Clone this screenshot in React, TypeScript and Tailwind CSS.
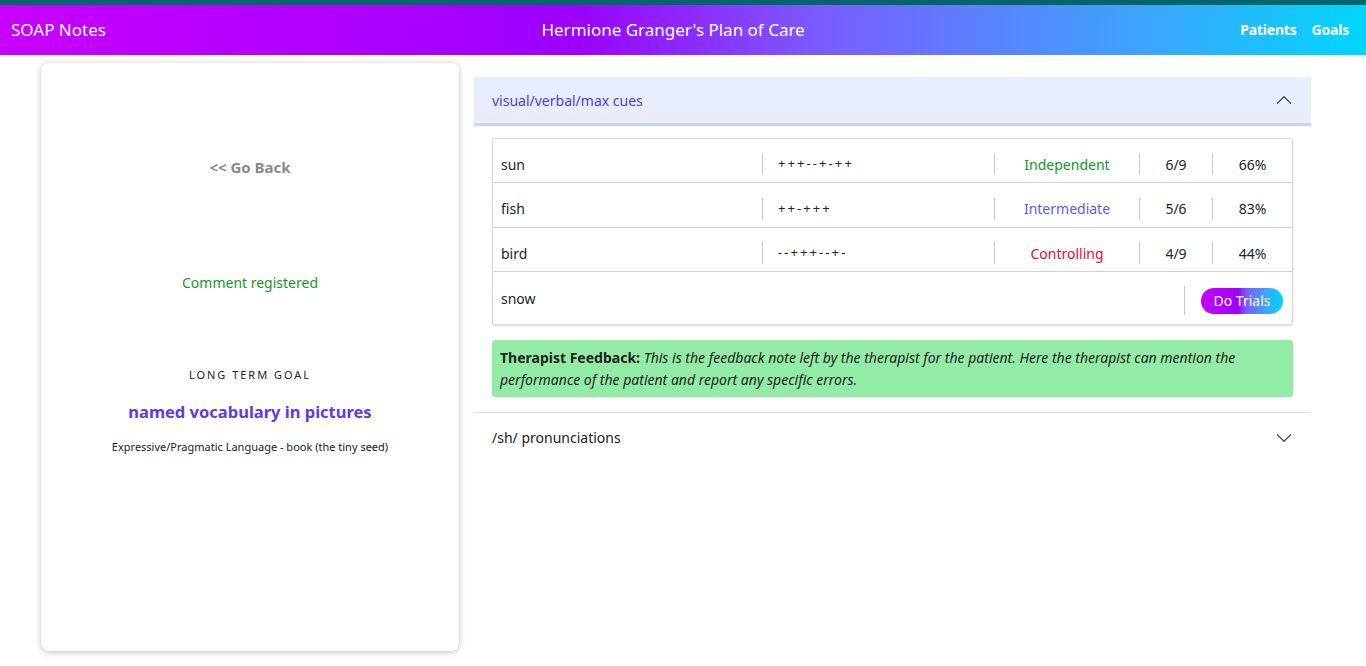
import React from 'react';

const font = "font-['Noto_Sans','Open_Sans',sans-serif]";

const rows = [
  { word: 'sun', marks: '+++--+-++', level: 'Independent', tone: 'text-[#0a9a2a]', score: '6/9', pct: '66%', h: 'h-[44px]' },
  { word: 'fish', marks: '++-+++', level: 'Intermediate', tone: 'text-[#5b5bf0]', score: '5/6', pct: '83%', h: 'h-[45px]' },
  { word: 'bird', marks: '--+++--+-', level: 'Controlling', tone: 'text-[#ee0a2a]', score: '4/9', pct: '44%', h: 'h-[44px]' },
];

const Chevron: React.FC<{ up?: boolean }> = ({ up }) => (
  <svg width="18" height="18" viewBox="0 0 16 16" fill="#333" className={up ? 'rotate-180' : ''}>
    <path d="M1.646 4.646a.5.5 0 0 1 .708 0L8 10.293l5.646-5.647a.5.5 0 0 1 .708.708l-6 6a.5.5 0 0 1-.708 0l-6-6a.5.5 0 0 1 0-.708z" />
  </svg>
);

const Cell: React.FC<{ className?: string; children: React.ReactNode }> = ({ className = '', children }) => (
  <div className={`flex items-center h-[22px] border-l border-[#ccc] ${className}`}>{children}</div>
);

export default function App() {
  return (
    <div className={`min-h-screen bg-white text-[#212529] ${font}`}>
      {/* top bar */}
      <div className="h-[5px] bg-[#05656a]" />
      <header className="h-[50px] flex items-center justify-between px-[11px] text-white bg-[linear-gradient(to_right,#c800ff_0%,#9c00ff_42%,#7a5cff_60%,#3aa8ff_85%,#00d6ff_100%)]">
        <div className="text-[17px]">SOAP Notes</div>
        <div className="text-[17px]">Hermione Granger's Plan of Care</div>
        <nav className="flex gap-[15px] text-[14px] tracking-[-0.2px] font-bold pr-[6px] -mt-[1px]">
          <span>Patients</span>
          <span>Goals</span>
        </nav>
      </header>

      <div className="flex">
        {/* left card */}
        <aside className="ml-[41px] mt-[8px] w-[418px] h-[588px] rounded-lg bg-white shadow-[0_1px_6px_rgba(0,0,0,0.25)] flex flex-col items-center text-center">
          <div className="mt-[93px] text-[15px] font-bold text-[#8a8a8a]">&lt;&lt; Go Back</div>
          <div className="mt-[93px] text-[14px] text-[#119a22]">Comment registered</div>
          <div className="mt-[74px] text-[11px] tracking-[0.18em] text-[#222]">LONG TERM GOAL</div>
          <div className="mt-[17px] text-[16.5px] font-bold text-[#5f3ae6]">named vocabulary in pictures</div>
          <div className="mt-[14px] text-[11px] text-[#222]">Expressive/Pragmatic Language - book (the tiny seed)</div>
        </aside>

        {/* right accordion */}
        <main className="ml-[15px] mt-[22px] w-[837px]">
          <div className="h-[49px] flex items-center justify-between pl-[18px] pr-[18px] bg-[#e8eefd] border-b-[3px] border-[#c3d4fb]">
            <span className="text-[14px] text-[#4a3fe0]">visual/verbal/max cues</span>
            <Chevron up />
          </div>

          <div className="px-[18px] pt-[12px] pb-[15px]">
            <div className="border border-[#d9d9d9] rounded-[3px] shadow-[0_1px_2px_rgba(0,0,0,0.15)] text-[14px]">
              {rows.map((r) => (
                <div key={r.word} className={`${r.h} pt-[7px] flex items-center border-b border-[#d0d0d0]`}>
                  <div className="w-[269px] pl-[8px]">{r.word}</div>
                  <Cell className="w-[232px] pl-[15px] tracking-[0.16em] text-[13px]">{r.marks}</Cell>
                  <Cell className={`w-[145px] justify-center ${r.tone}`}>{r.level}</Cell>
                  <Cell className="w-[73px] justify-center">{r.score}</Cell>
                  <Cell className="flex-1 justify-center">{r.pct}</Cell>
                </div>
              ))}
              <div className="h-[52px] flex items-center">
                <div className="flex-1 pl-[8px]">snow</div>
                <div className="h-[29px] border-l border-[#ccc] mt-[5px] flex items-center pl-[16px] pr-[9px]">
                  <button className="h-[26px] w-[82px] rounded-full text-white text-[14px] bg-[linear-gradient(to_right,#c800ff_0%,#9c00ff_45%,#7a5cff_55%,#3aa8ff_80%,#00d6ff_100%)]">
                    Do Trials
                  </button>
                </div>
              </div>
            </div>

            <div className="mt-[15px] bg-[#93eca6] rounded-[3px] px-[8px] pt-[7px] pb-[6px] text-[14px] leading-[22px] text-[#222]">
              <span className="font-bold">Therapist Feedback:</span>{' '}
              <i>This is the feedback note left by the therapist for the patient. Here the therapist can mention the performance of the patient and report any specific errors.</i>
            </div>
          </div>

          <div className="h-[50px] flex items-center justify-between px-[18px] border-t border-[#dedede]">
            <span className="text-[14px] text-[#222]">/sh/ pronunciations</span>
            <Chevron />
          </div>
        </main>
      </div>
    </div>
  );
}
